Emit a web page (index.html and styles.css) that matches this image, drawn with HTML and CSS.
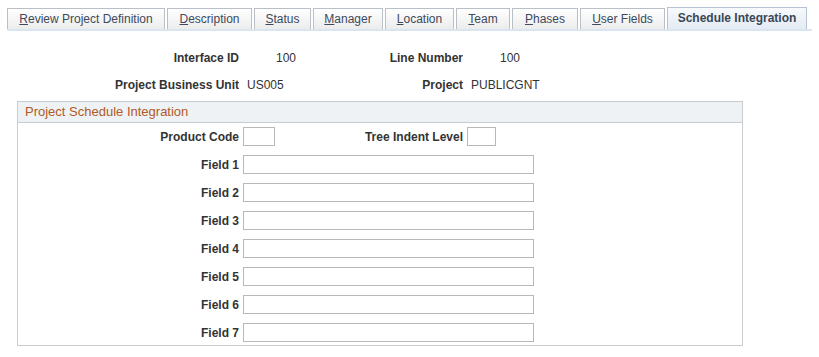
FILE: index.html
```html
<!DOCTYPE html>
<html>
<head>
<meta charset="utf-8">
<link rel="stylesheet" href="styles.css">
</head>
<body>
<div class="page">
  <div class="tabs">
    <div class="tab t1"><u>R</u>eview Project Definition</div>
    <div class="tab t2"><u>D</u>escription</div>
    <div class="tab t3"><u>S</u>tatus</div>
    <div class="tab t4"><u>M</u>anager</div>
    <div class="tab t5"><u>L</u>ocation</div>
    <div class="tab t6"><u>T</u>eam</div>
    <div class="tab t7"><u>P</u>hases</div>
    <div class="tab t8"><u>U</u>ser Fields</div>
    <div class="tab t9 active">Schedule Integration</div>
  </div>

  <div class="summary">
    <div class="lbl">Interface ID</div>
    <div class="val num">100</div>
    <div class="lbl">Line Number</div>
    <div class="val num">100</div>
    <div class="lbl">Project Business Unit</div>
    <div class="val">US005</div>
    <div class="lbl">Project</div>
    <div class="val">PUBLICGNT</div>
  </div>

  <div class="group">
    <div class="group-head">Project Schedule Integration</div>
    <div class="group-body">
      <div class="row">
        <label class="flbl">Product Code</label>
        <div class="inp small"></div>
        <label class="flbl2">Tree Indent Level</label>
        <div class="inp small2"></div>
      </div>
      <div class="row"><label class="flbl">Field 1</label><div class="inp wide"></div></div>
      <div class="row"><label class="flbl">Field 2</label><div class="inp wide"></div></div>
      <div class="row"><label class="flbl">Field 3</label><div class="inp wide"></div></div>
      <div class="row"><label class="flbl">Field 4</label><div class="inp wide"></div></div>
      <div class="row"><label class="flbl">Field 5</label><div class="inp wide"></div></div>
      <div class="row"><label class="flbl">Field 6</label><div class="inp wide"></div></div>
      <div class="row"><label class="flbl">Field 7</label><div class="inp wide"></div></div>
    </div>
  </div>
</div>
</body>
</html>
```

FILE: styles.css
```css
html, body {
  margin: 0;
  padding: 0;
  background: #ffffff;
}
body {
  font-family: "Liberation Sans", Arial, sans-serif;
  font-size: 12px;
  color: #333333;
}
.page {
  width: 819px;
  height: 357px;
  overflow: hidden;
}
.tabs {
  display: flex;
  align-items: flex-end;
  gap: 2px;
  margin: 7px 0 0 7px;
  width: 805px;
  border-bottom: 2px solid #dbe5f0;
}
.tab {
  box-sizing: border-box;
  height: 21px;
  line-height: 20px;
  text-align: center;
  border: 1px solid #b9bfc7;
  border-bottom: none;
  background: linear-gradient(#ffffff, #ececec);
  color: #3d4a5b;
  white-space: nowrap;
  font-size: 12px;
}
.t1 { width: 158px; }
.t2 { width: 85px; }
.t3 { width: 57px; }
.t4 { width: 70px; }
.t5 { width: 69px; }
.t6 { width: 54px; }
.t7 { width: 66px; }
.t8 { width: 85px; }
.t9 { width: 140px; }
.tab u {
  text-decoration: underline;
}
.tab.active {
  height: 22px;
  line-height: 21px;
  font-weight: bold;
  color: #3a4656;
  border-color: #b7c3d2;
  background: linear-gradient(#f7f9fc, #e3ebf5);
}
.summary {
  display: grid;
  grid-template-columns: 239px 110px 98px auto;
  grid-auto-rows: 27px;
  column-gap: 8px;
  align-items: center;
  margin-top: 13px;
}
.summary .lbl {
  font-weight: bold;
  text-align: right;
  color: #333;
}
.summary .val {
  color: #333;
}
.summary .val.num {
  padding-left: 29px;
}
.group {
  margin: 3px 0 0 17px;
  width: 726px;
  box-sizing: border-box;
  border: 1px solid #c8ccd1;
}
.group-head {
  height: 20px;
  line-height: 20px;
  background: #eef2f4;
  border-bottom: 1px solid #c8ccd1;
  padding-left: 7px;
  font-size: 13px;
  color: #b05a28;
}
.group-body {
  display: flex;
  flex-direction: column;
  gap: 9px;
  padding: 4px 0 3px 0;
}
.row {
  display: flex;
  align-items: center;
  height: 19px;
}
.flbl {
  width: 221px;
  text-align: right;
  font-weight: bold;
  margin-right: 4px;
  color: #333;
}
.flbl2 {
  width: 188px;
  text-align: right;
  font-weight: bold;
  margin-right: 4px;
  color: #333;
}
.inp {
  height: 19px;
  box-sizing: border-box;
  border: 1px solid #b8b8b8;
  background: #fff;
}
.inp.small { width: 32px; }
.inp.small2 { width: 29px; }
.inp.wide { width: 291px; }
```
